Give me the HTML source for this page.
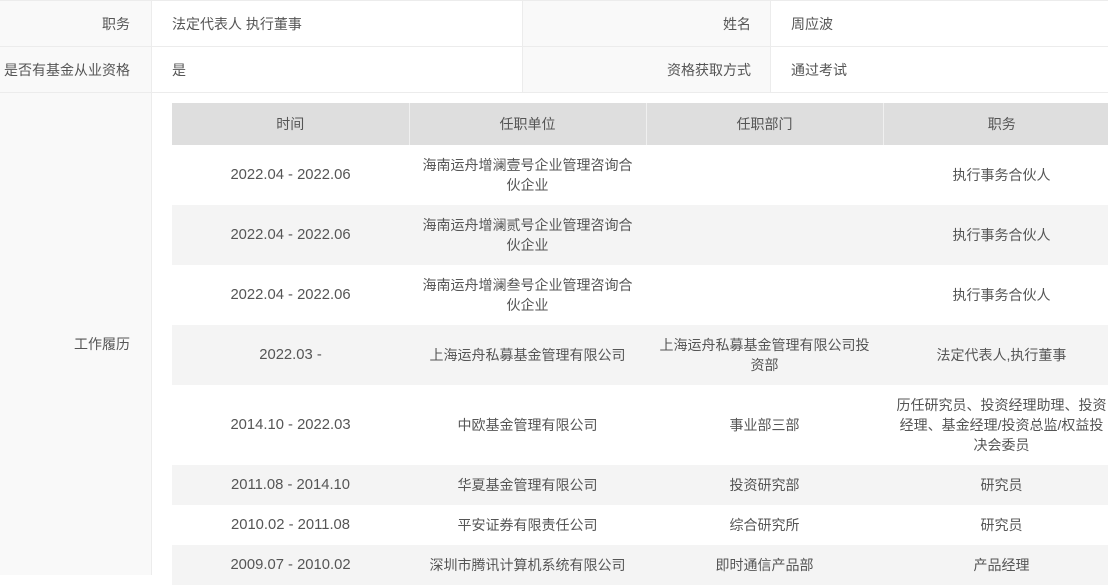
<!DOCTYPE html>
<html><head><meta charset="utf-8"><style>
*{margin:0;padding:0;box-sizing:border-box}
body{width:1108px;height:575px;overflow:hidden;background:#fff;font-family:"Liberation Sans","Noto Sans CJK SC",sans-serif;font-size:14px;color:#555;position:relative}
.a{position:absolute}
.lab{background:#f9f9f9;text-align:right;padding-right:21px;line-height:47px}
.val{padding-left:20px;line-height:47px}
.h{position:absolute;left:0;width:1108px;height:1px;background:#ececec}
.v{position:absolute;width:1px;background:#ececec}
table{position:absolute;left:172px;top:103px;width:948px;border-collapse:collapse;table-layout:fixed}
td,th{width:237px;text-align:center;vertical-align:middle;padding:10px;line-height:20px;font-weight:normal}
th{background:#dedede;height:42px;border-left:1px solid #f0f0f0}
th:first-child{border-left:none}
td:first-child{font-size:14.8px}
tr.g td{background:#f4f4f4}
</style></head><body>
<div class="a lab" style="left:0;top:1px;width:151px;height:45px">职务</div>
<div class="a val" style="left:152px;top:1px">法定代表人 执行董事</div>
<div class="a lab" style="left:523px;top:1px;width:248px;height:45px;padding-right:20px">姓名</div>
<div class="a val" style="left:771px;top:1px">周应波</div>
<div class="a lab" style="left:0;top:47px;width:151px;height:45px">是否有基金从业资格</div>
<div class="a val" style="left:152px;top:47px">是</div>
<div class="a lab" style="left:523px;top:47px;width:248px;height:45px;padding-right:20px">资格获取方式</div>
<div class="a val" style="left:771px;top:47px">通过考试</div>
<div class="a lab" style="left:0;top:93px;width:151px;height:482px;line-height:20px;padding-top:241px">工作履历</div>
<div class="h" style="top:0"></div><div class="h" style="top:46px"></div><div class="h" style="top:92px"></div>
<div class="v" style="left:151px;top:0;height:575px"></div>
<div class="v" style="left:522px;top:0;height:92px"></div>
<div class="v" style="left:770px;top:0;height:92px"></div>
<table>
<tr><th>时间</th><th>任职单位</th><th>任职部门</th><th>职务</th></tr>
<tr style="height:60px"><td>2022.04 - 2022.06</td><td>海南运舟增澜壹号企业管理咨询合伙企业</td><td></td><td>执行事务合伙人</td></tr>
<tr class="g" style="height:60px"><td>2022.04 - 2022.06</td><td>海南运舟增澜贰号企业管理咨询合伙企业</td><td></td><td>执行事务合伙人</td></tr>
<tr style="height:60px"><td>2022.04 - 2022.06</td><td>海南运舟增澜叁号企业管理咨询合伙企业</td><td></td><td>执行事务合伙人</td></tr>
<tr class="g" style="height:60px"><td>2022.03 -</td><td>上海运舟私募基金管理有限公司</td><td>上海运舟私募基金管理有限公司投资部</td><td>法定代表人,执行董事</td></tr>
<tr style="height:80px"><td>2014.10 - 2022.03</td><td>中欧基金管理有限公司</td><td>事业部三部</td><td>历任研究员、投资经理助理、投资经理、基金经理/投资总监/权益投决会委员</td></tr>
<tr class="g" style="height:40px"><td>2011.08 - 2014.10</td><td>华夏基金管理有限公司</td><td>投资研究部</td><td>研究员</td></tr>
<tr style="height:40px"><td>2010.02 - 2011.08</td><td>平安证券有限责任公司</td><td>综合研究所</td><td>研究员</td></tr>
<tr class="g" style="height:40px"><td>2009.07 - 2010.02</td><td>深圳市腾讯计算机系统有限公司</td><td>即时通信产品部</td><td>产品经理</td></tr>
</table>
</body></html>
